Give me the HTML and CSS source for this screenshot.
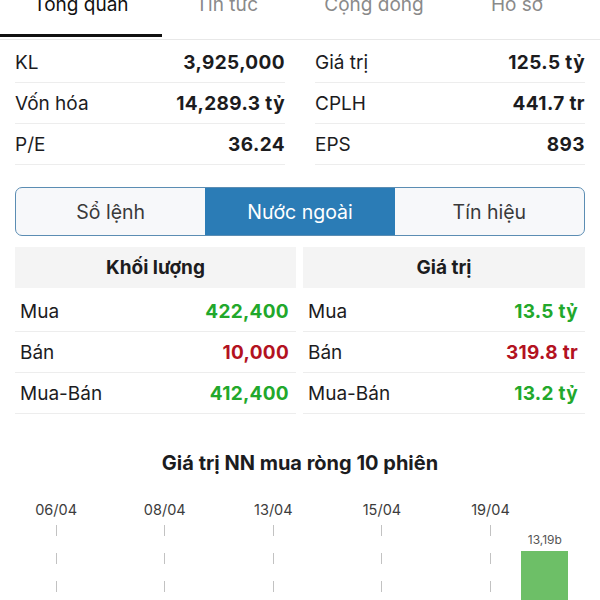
FILE: index.html
```html
<!DOCTYPE html>
<html lang="vi">
<head>
    <meta charset="UTF-8">
    <meta name="viewport" content="width=device-width, initial-scale=1.0">
    <title>Tổng quan</title>
    <link rel="stylesheet" href="styles.css">
</head>
<body>
    <div class="tabs">
        <div class="tab active">Tổng quan</div>
        <div class="tab t2">Tin tức</div>
        <div class="tab t3">Cộng đồng</div>
        <div class="tab t4">Hồ sơ</div>
    </div>

    <div class="stats">
        <div class="stat-col">
            <div class="row"><span>KL</span><b>3,925,000</b></div>
            <div class="row"><span>Vốn hóa</span><b>14,289.3 tỷ</b></div>
            <div class="row"><span>P/E</span><b>36.24</b></div>
        </div>
        <div class="stat-col">
            <div class="row"><span>Giá trị</span><b>125.5 tỷ</b></div>
            <div class="row"><span>CPLH</span><b>441.7 tr</b></div>
            <div class="row"><span>EPS</span><b>893</b></div>
        </div>
    </div>

    <div class="segment">
        <div class="seg">Sổ lệnh</div>
        <div class="seg selected">Nước ngoài</div>
        <div class="seg">Tín hiệu</div>
    </div>

    <div class="foreign">
        <div class="f-col">
            <div class="f-head">Khối lượng</div>
            <div class="f-row"><span>Mua</span><b class="up">422,400</b></div>
            <div class="f-row"><span>Bán</span><b class="down">10,000</b></div>
            <div class="f-row"><span>Mua-Bán</span><b class="up">412,400</b></div>
        </div>
        <div class="f-col">
            <div class="f-head">Giá trị</div>
            <div class="f-row"><span>Mua</span><b class="up">13.5 tỷ</b></div>
            <div class="f-row"><span>Bán</span><b class="down">319.8 tr</b></div>
            <div class="f-row"><span>Mua-Bán</span><b class="up">13.2 tỷ</b></div>
        </div>
    </div>

    <h3 class="chart-title">Giá trị NN mua ròng 10 phiên</h3>

    <div class="chart">
        <div class="col"><div class="date">06/04</div><div class="plot dashed"></div></div>
        <div class="col"><div class="date"></div><div class="plot"></div></div>
        <div class="col"><div class="date">08/04</div><div class="plot dashed"></div></div>
        <div class="col"><div class="date"></div><div class="plot"></div></div>
        <div class="col"><div class="date">13/04</div><div class="plot dashed"></div></div>
        <div class="col"><div class="date"></div><div class="plot"></div></div>
        <div class="col"><div class="date">15/04</div><div class="plot dashed"></div></div>
        <div class="col"><div class="date"></div><div class="plot"></div></div>
        <div class="col"><div class="date">19/04</div><div class="plot dashed"></div></div>
        <div class="col">
            <div class="date"></div>
            <div class="plot">
                <div class="bar-label">13,19b</div>
                <div class="bar"></div>
            </div>
        </div>
    </div>
</body>
</html>
```

FILE: styles.css
```css
body {
    margin: 0;
    font-family: Inter, "Liberation Sans", sans-serif;
    color: #1c1c1e;
    background: #fff;
    overflow: hidden;
}

/* top tabs */
.tabs {
    display: flex;
    height: 39px;
    border-bottom: 1px solid #e8e8e8;
}
.tab {
    font-size: 19px;
    line-height: 24px;
    margin-top: -7px;
    color: #8a8a8a;
    text-align: center;
}
.tab.active {
    width: 162px;
    color: #111;
    height: 44px;
    border-bottom: 3px solid #111;
    box-sizing: border-box;
}
.t2 { width: 130px; }
.t3 { width: 164px; }
.t4 { width: 122px; }

/* stats */
.stats {
    display: grid;
    grid-template-columns: 1fr 1fr;
    gap: 30px;
    padding: 2px 15px 0;
}
.row {
    display: flex;
    justify-content: space-between;
    align-items: center;
    height: 40px;
    border-bottom: 1px solid #ededed;
    font-size: 19px;
}
.row b {
    font-weight: 700;
    letter-spacing: 0.4px;
}

/* segmented control */
.segment {
    display: flex;
    margin: 22px 15px 0;
    height: 49px;
    border: 1.5px solid #5b8db3;
    border-radius: 7px;
    overflow: hidden;
    box-sizing: border-box;
    background: #f7f8fa;
}
.seg {
    flex: 1;
    display: flex;
    align-items: center;
    justify-content: center;
    font-size: 19.5px;
    color: #3a3a3a;
}
.seg.selected {
    background: #2b7cb6;
    color: #fff;
}

/* foreign trading */
.foreign {
    display: grid;
    grid-template-columns: 281px 282px;
    gap: 7px;
    margin: 11px 15px 0;
}
.f-head {
    height: 41px;
    background: #f4f4f4;
    display: flex;
    align-items: center;
    justify-content: center;
    font-size: 19px;
    font-weight: 700;
    margin-bottom: 3px;
}
.f-row {
    display: flex;
    justify-content: space-between;
    align-items: center;
    height: 40px;
    padding: 0 7px 0 5px;
    border-bottom: 1px solid #ededed;
    font-size: 19px;
}
.f-row b {
    font-weight: 700;
    letter-spacing: 0.3px;
}
.up { color: #22a82b; }
.down { color: #b3121f; }

/* chart */
.chart-title {
    margin: 37px 0 0;
    text-align: center;
    font-size: 20px;
    font-weight: 700;
    line-height: 24px;
}
.chart {
    display: grid;
    grid-template-columns: repeat(10, 1fr);
    margin: 25px 28px 0 29px;
}
.col {
    display: flex;
    flex-direction: column;
    align-items: center;
}
.date {
    height: 20px;
    font-size: 14.5px;
    line-height: 20px;
    color: #3c3c3c;
}
.plot {
    margin-top: 5px;
    height: 80px;
    width: 100%;
    display: flex;
    flex-direction: column;
    align-items: center;
}
.plot.dashed {
    width: 1px;
    background: repeating-linear-gradient(to bottom, #c2c2c2 0 11px, transparent 11px 28px);
}
.bar-label {
    margin-top: 8px;
    font-size: 12px;
    line-height: 14px;
    color: #555;
}
.bar {
    margin-top: 4px;
    width: 47px;
    height: 60px;
    background: #6dbf67;
}
```
